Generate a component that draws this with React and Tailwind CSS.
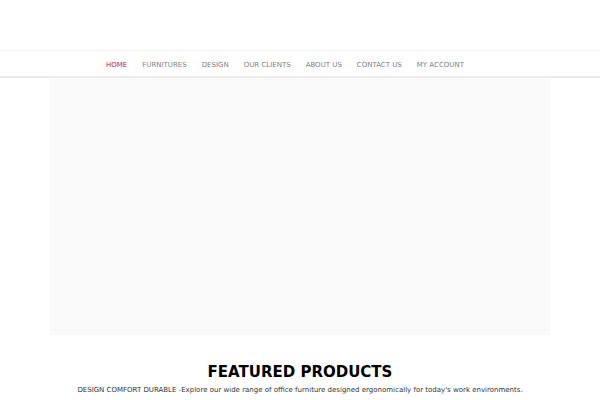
const navItems = ["HOME", "FURNITURES", "DESIGN", "OUR CLIENTS", "ABOUT US", "CONTACT US", "MY ACCOUNT"];

export default function App() {
  return (
    <div className="w-[600px] h-[400px] overflow-hidden bg-white font-['DejaVu_Sans',sans-serif]">
      <header className="h-[51px] border-b border-[#f2f2f2]" />
      <nav className="h-[27px] border-b-2 border-[#ececec] flex items-center justify-center gap-[15px] pt-[3px] pr-[30px] text-[7px]">
        {navItems.map((item, i) => (
          <span key={item} className={i === 0 ? "text-[#c8241f]" : "text-[#808080]"}>
            {item}
          </span>
        ))}
      </nav>
      <div className="mx-[50px] mt-[1px] h-[256px] bg-[#f9f9f9]" />
      <section className="pt-[28px] text-center">
        <h2 className="text-[15px] font-bold leading-[18px] text-black">FEATURED PRODUCTS</h2>
        <p className="mt-[5px] text-[7px] leading-[9px] text-[#333]">
          DESIGN COMFORT DURABLE -Explore our wide range of office furniture designed ergonomically for today's work environments.
        </p>
      </section>
    </div>
  );
}
